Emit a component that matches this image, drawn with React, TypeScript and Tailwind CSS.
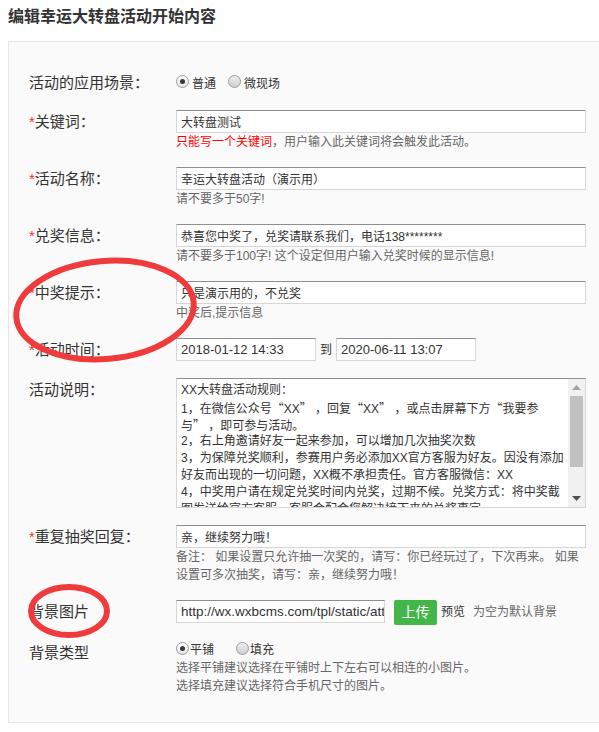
const font = "font-['Liberation_Sans','Noto_Sans_CJK_SC',sans-serif]";

function Radio({ checked }: { checked?: boolean }) {
  return (
    <span
      className={`relative -top-[2px] inline-flex h-[13px] w-[13px] shrink-0 items-center justify-center rounded-full border border-[#9c9c9c] bg-linear-to-b ${
        checked ? "from-[#ffffff] to-[#e4e4e4]" : "from-[#eeeeee] to-[#cfcfcf]"
      }`}
    >
      {checked && <span className="h-[5px] w-[5px] rounded-full bg-[#3a3a3a]" />}
    </span>
  );
}

function Label({ text, required }: { text: string; required?: boolean }) {
  return (
    <div className="w-[147px] shrink-0 text-[15px] leading-[23px] text-[#333]">
      {required && <span className="text-[#f23030]">*</span>}
      {text}
    </div>
  );
}

function TextInput({ value, className = "w-[410px]", size = "text-[12px]" }: { value: string; className?: string; size?: string }) {
  return (
    <input
      readOnly
      defaultValue={value}
      className={`block h-[23px] border border-[#d6d6d6] border-t-[#8e8e8e] bg-white pl-[4px] ${size} text-[#333] outline-none ${className}`}
    />
  );
}

function Hint({ children }: { children: React.ReactNode }) {
  return <div className="whitespace-nowrap text-[12px] leading-[18px] text-[#666]">{children}</div>;
}

// CJK quotes look full width in the original, so render them with the CJK font
function RuleLine({ text }: { text: string }) {
  const parts = text.split(/([“”])/);
  return (
    <div className="h-[17px] whitespace-nowrap">
      {parts.map((p, i) =>
        p === "“" || p === "”" ? (
          <span key={i} className="font-['Noto_Sans_CJK_SC',sans-serif] leading-[17px]">
            {p}
          </span>
        ) : (
          <span key={i}>{p}</span>
        )
      )}
    </div>
  );
}

const rules = [
  "XX大转盘活动规则：",
  "1，在微信公众号“XX” ，回复“XX” ，或点击屏幕下方“我要参",
  "与” ，即可参与活动。",
  "2，右上角邀请好友一起来参加，可以增加几次抽奖次数",
  "3，为保障兑奖顺利，参赛用户务必添加XX官方客服为好友。因没有添加",
  "好友而出现的一切问题，XX概不承担责任。官方客服微信：XX",
  "4，中奖用户请在规定兑奖时间内兑奖，过期不候。兑奖方式：将中奖截",
  "图发送给官方客服，客服会配合您解决接下来的兑奖事宜",
];

export default function App() {
  return (
    <div className={`relative min-h-[732px] bg-white pl-2 ${font}`}>
      <h1 className="h-[41px] pt-[6px] text-[16px] font-bold leading-[22px] text-[#333]">编辑幸运大转盘活动开始内容</h1>

      <div className="flex flex-col gap-4 border-y border-l border-[#e6e6e6] bg-[#fafafa] pb-[27px] pl-5 pt-[29px]">
        <div className="flex">
          <Label text="活动的应用场景：" />
          <div className="flex items-center pt-[2px] text-[12px] leading-[18px] text-[#333]">
            <Radio checked />
            <span className="ml-[3px]">普通</span>
            <span className="ml-[12px]" />
            <Radio />
            <span className="ml-[3px]">微现场</span>
          </div>
        </div>

        <div className="flex">
          <Label text="关键词：" required />
          <div>
            <TextInput value="大转盘测试" />
            <Hint>
              <span className="text-[#f00]">只能写一个关键词</span>，用户输入此关键词将会触发此活动。
            </Hint>
          </div>
        </div>

        <div className="flex">
          <Label text="活动名称：" required />
          <div>
            <TextInput value="幸运大转盘活动（演示用）" />
            <Hint>请不要多于50字!</Hint>
          </div>
        </div>

        <div className="flex">
          <Label text="兑奖信息：" required />
          <div>
            <TextInput value="恭喜您中奖了，兑奖请联系我们，电话138********" />
            <Hint>请不要多于100字! 这个设定但用户输入兑奖时候的显示信息!</Hint>
          </div>
        </div>

        <div className="flex">
          <Label text="中奖提示：" required />
          <div>
            <TextInput value="只是演示用的，不兑奖" />
            <Hint>中奖后,提示信息</Hint>
          </div>
        </div>

        <div className="flex">
          <Label text="活动时间：" required />
          <div className="flex items-center">
            <TextInput value="2018-01-12 14:33" className="w-[140px]" size="text-[13px]" />
            <span className="mx-[4px] text-[12px] text-[#333]">到</span>
            <TextInput value="2020-06-11 13:07" className="w-[140px]" size="text-[13px]" />
          </div>
        </div>

        <div className="mt-[1px] flex">
          <Label text="活动说明：" />
          <div className="flex h-[130px] w-[410px] border border-[#d6d6d6] border-t-[#8e8e8e] bg-white">
            <div className="flex-1 overflow-hidden pl-[4px] pt-[3px] text-[12px] leading-[17px] text-[#333]">
              {rules.map((line, i) => (
                <RuleLine key={i} text={line} />
              ))}
            </div>
            <div className="flex w-[17px] flex-col items-center bg-[#f1f1f1]">
              <div className="flex h-[17px] items-center">
                <svg width="9" height="5" viewBox="0 0 9 5">
                  <path d="M0 5 L4.5 0 L9 5 Z" fill="#a3a3a3" />
                </svg>
              </div>
              <div className="h-[71px] w-[13px] bg-[#c1c1c1]" />
              <div className="flex-1" />
              <div className="flex h-[17px] items-center">
                <svg width="9" height="5" viewBox="0 0 9 5">
                  <path d="M0 0 L9 0 L4.5 5 Z" fill="#505050" />
                </svg>
              </div>
            </div>
          </div>
        </div>

        <div className="mt-[1px] flex">
          <Label text="重复抽奖回复：" required />
          <div>
            <TextInput value="亲，继续努力哦！" />
            <Hint>备注： 如果设置只允许抽一次奖的，请写：你已经玩过了，下次再来。 如果</Hint>
            <Hint>设置可多次抽奖，请写：亲，继续努力哦！</Hint>
          </div>
        </div>

        <div className="flex">
          <Label text="背景图片" />
          <div className="flex items-start">
            <TextInput value="http://wx.wxbcms.com/tpl/static/attachment/background.jpg" className="w-[209px]" size="text-[13.5px]" />
            <button className="ml-[9px] h-[25px] w-[43px] rounded-[2px] bg-[#44b549] text-[14px] leading-[25px] text-white">上传</button>
            <span className="ml-[4px] text-[12px] leading-[25px] text-[#333]">预览</span>
            <span className="ml-[8px] text-[12px] leading-[25px] text-[#666]">为空为默认背景</span>
          </div>
        </div>

        <div className="flex">
          <Label text="背景类型" />
          <div>
            <div className="flex items-center text-[12px] leading-[18px] text-[#333]">
              <Radio checked />
              <span className="ml-[1px]">平铺</span>
              <span className="ml-[22px]" />
              <Radio />
              <span className="ml-[1px]">填充</span>
            </div>
            <Hint>选择平铺建议选择在平铺时上下左右可以相连的小图片。</Hint>
            <Hint>选择填充建议选择符合手机尺寸的图片。</Hint>
          </div>
        </div>
      </div>

      <svg className="pointer-events-none absolute left-0 top-0" width="599" height="732">
        <ellipse cx="105" cy="310" rx="89" ry="49" transform="rotate(-5 105 310)" fill="none" stroke="#ef3b3b" strokeWidth="6" />
        <ellipse cx="69" cy="611" rx="38" ry="24" fill="none" stroke="#ef3b3b" strokeWidth="6" />
      </svg>
    </div>
  );
}
